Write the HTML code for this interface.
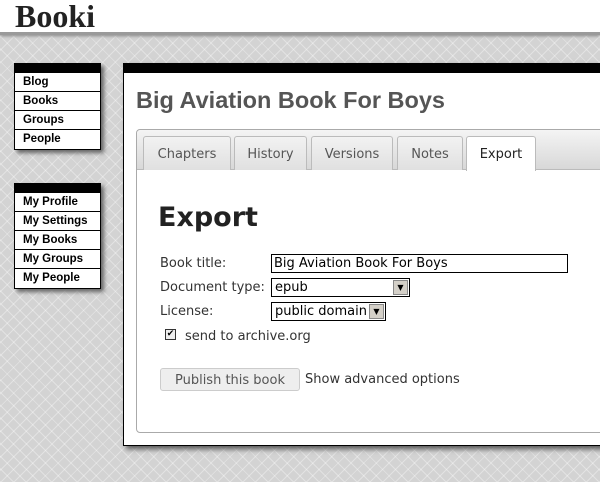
<!DOCTYPE html>
<html><head><style>
*{margin:0;padding:0;box-sizing:border-box}
body{width:600px;height:482px;overflow:hidden;position:relative;font-family:"DejaVu Sans",sans-serif;
background-color:#d3d3d3;
background-image:repeating-linear-gradient(45deg,rgba(255,255,255,.35) 0 1px,transparent 1px 9px),repeating-linear-gradient(-45deg,rgba(255,255,255,.35) 0 1px,transparent 1px 9px);}
#hdr{position:absolute;left:0;top:0;width:600px;height:35px;background:#fff;border-bottom:3px solid #9a9a9a;box-shadow:0 1px 3px #888}
#logo{position:absolute;left:15px;top:-2px;font-family:"Liberation Serif",serif;font-size:32px;color:#222;font-weight:bold;letter-spacing:0px}
.nav{position:absolute;left:14px;width:87px;background:#fff;border:1px solid #000;border-top:10px solid #000;box-shadow:3px 3px 4px #666}
.nav div{height:19px;border-bottom:1px solid #000;font:bold 11.5px "Liberation Sans",sans-serif;padding:3px 0 0 8px;color:#000}
.nav div:last-child{border-bottom:none}
#main{position:absolute;left:123px;top:63px;width:490px;height:383px;background:#fff;border:1px solid #000;border-top:10px solid #000;box-shadow:3px 3px 5px #555}
h1{position:absolute;left:12px;top:14px;font:bold 23.5px "Liberation Sans",sans-serif;color:#555}
#box{position:absolute;left:12px;top:56px;width:480px;height:304px;border:1px solid #aaa;border-radius:4px}
#bar{position:absolute;left:0;top:0;right:0;height:40px;background:linear-gradient(#f4f4f4,#d8d8d8);border-bottom:1px solid #bbb;border-radius:4px 4px 0 0}
.tab{position:absolute;top:6px;height:34px;background:linear-gradient(#f2f2f2,#e0e0e0);border:1px solid #bbb;border-bottom:none;border-radius:3px 3px 0 0;font-size:13px;color:#555;text-align:center;padding-top:10px}
.tab.act{background:#fff;color:#222;height:35px}
.lbl{position:absolute;left:160px;font-size:13px;color:#333}
</style></head><body>
<div id="hdr"><div id="logo">Booki</div></div>
<div class="nav" style="top:63px"><div>Blog</div><div>Books</div><div>Groups</div><div>People</div></div>
<div class="nav" style="top:183px"><div>My Profile</div><div>My Settings</div><div>My Books</div><div>My Groups</div><div>My People</div></div>
<div id="main"><h1>Big Aviation Book For Boys</h1>
<div id="box"><div id="bar"></div>
<div class="tab" style="left:6px;width:88px">Chapters</div>
<div class="tab" style="left:97px;width:73px">History</div>
<div class="tab" style="left:174px;width:82px">Versions</div>
<div class="tab" style="left:260px;width:66px">Notes</div>
<div class="tab act" style="left:329px;width:70px">Export</div>
</div></div>
<div style="position:absolute;left:158px;top:202px;font-size:27px;font-weight:bold;color:#222">Export</div>
<div class="lbl" style="top:256px">Book title:</div>
<div class="lbl" style="top:280px">Document type:</div>
<div class="lbl" style="top:304px">License:</div>
<div style="position:absolute;left:271px;top:254px;width:297px;height:19px;border:1px solid #000;font-size:13px;padding:1px 2px">Big Aviation Book For Boys</div>
<div style="position:absolute;left:271px;top:278px;width:139px;height:19px;border:1px solid #000;font-size:13px;padding:1px 3px">epub<span style="position:absolute;right:1px;top:1px;width:15px;height:15px;background:#d4d0c8;border:1px solid #888;font-size:8px;text-align:center;line-height:14px">▼</span></div>
<div style="position:absolute;left:271px;top:302px;width:115px;height:19px;border:1px solid #000;font-size:13px;padding:1px 3px;white-space:nowrap">public domain<span style="position:absolute;right:1px;top:1px;width:15px;height:15px;background:#d4d0c8;border:1px solid #888;font-size:8px;text-align:center;line-height:14px">▼</span></div>
<div style="position:absolute;left:165px;top:329px;width:11px;height:11px;border:1px solid #333;background:#eee;font-size:9px;line-height:9px;text-align:center">✔</div>
<div class="lbl" style="left:185px;top:329px">send to archive.org</div>
<div style="position:absolute;left:160px;top:368px;width:140px;height:23px;background:#eee;border:1px solid #ccc;border-radius:3px;font-size:13px;color:#555;text-align:center;padding-top:4px">Publish this book</div>
<div class="lbl" style="left:305px;top:372px">Show advanced options</div>
</body></html>
